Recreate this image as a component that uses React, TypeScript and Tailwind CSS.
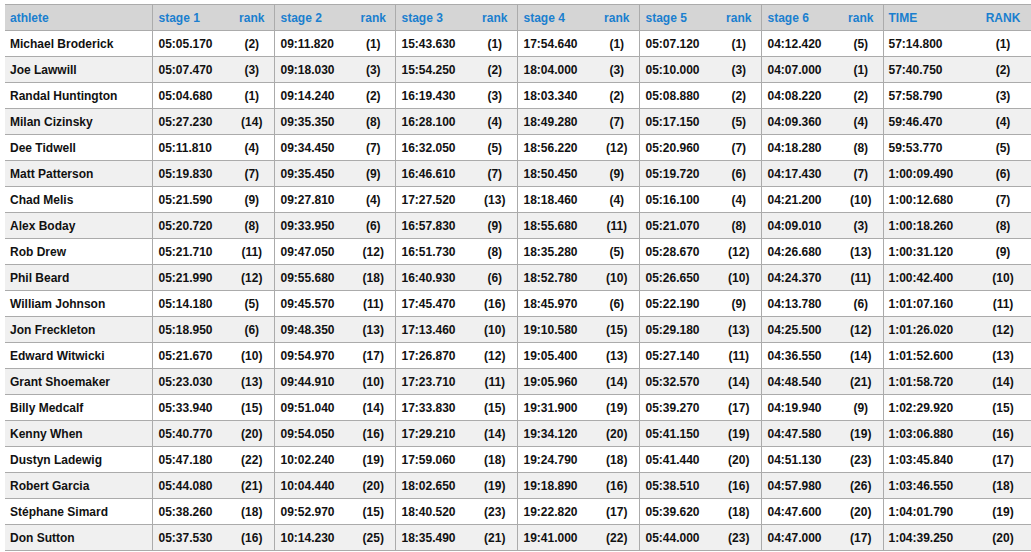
import React from 'react';

type Row = [string, ...string[]];

// name, then pairs of time/rank for 6 stages, then total time/rank
const rows: Row[] = [
  ['Michael Broderick', '05:05.170', '2', '09:11.820', '1', '15:43.630', '1', '17:54.640', '1', '05:07.120', '1', '04:12.420', '5', '57:14.800', '1'],
  ['Joe Lawwill', '05:07.470', '3', '09:18.030', '3', '15:54.250', '2', '18:04.000', '3', '05:10.000', '3', '04:07.000', '1', '57:40.750', '2'],
  ['Randal Huntington', '05:04.680', '1', '09:14.240', '2', '16:19.430', '3', '18:03.340', '2', '05:08.880', '2', '04:08.220', '2', '57:58.790', '3'],
  ['Milan Cizinsky', '05:27.230', '14', '09:35.350', '8', '16:28.100', '4', '18:49.280', '7', '05:17.150', '5', '04:09.360', '4', '59:46.470', '4'],
  ['Dee Tidwell', '05:11.810', '4', '09:34.450', '7', '16:32.050', '5', '18:56.220', '12', '05:20.960', '7', '04:18.280', '8', '59:53.770', '5'],
  ['Matt Patterson', '05:19.830', '7', '09:35.450', '9', '16:46.610', '7', '18:50.450', '9', '05:19.720', '6', '04:17.430', '7', '1:00:09.490', '6'],
  ['Chad Melis', '05:21.590', '9', '09:27.810', '4', '17:27.520', '13', '18:18.460', '4', '05:16.100', '4', '04:21.200', '10', '1:00:12.680', '7'],
  ['Alex Boday', '05:20.720', '8', '09:33.950', '6', '16:57.830', '9', '18:55.680', '11', '05:21.070', '8', '04:09.010', '3', '1:00:18.260', '8'],
  ['Rob Drew', '05:21.710', '11', '09:47.050', '12', '16:51.730', '8', '18:35.280', '5', '05:28.670', '12', '04:26.680', '13', '1:00:31.120', '9'],
  ['Phil Beard', '05:21.990', '12', '09:55.680', '18', '16:40.930', '6', '18:52.780', '10', '05:26.650', '10', '04:24.370', '11', '1:00:42.400', '10'],
  ['William Johnson', '05:14.180', '5', '09:45.570', '11', '17:45.470', '16', '18:45.970', '6', '05:22.190', '9', '04:13.780', '6', '1:01:07.160', '11'],
  ['Jon Freckleton', '05:18.950', '6', '09:48.350', '13', '17:13.460', '10', '19:10.580', '15', '05:29.180', '13', '04:25.500', '12', '1:01:26.020', '12'],
  ['Edward Witwicki', '05:21.670', '10', '09:54.970', '17', '17:26.870', '12', '19:05.400', '13', '05:27.140', '11', '04:36.550', '14', '1:01:52.600', '13'],
  ['Grant Shoemaker', '05:23.030', '13', '09:44.910', '10', '17:23.710', '11', '19:05.960', '14', '05:32.570', '14', '04:48.540', '21', '1:01:58.720', '14'],
  ['Billy Medcalf', '05:33.940', '15', '09:51.040', '14', '17:33.830', '15', '19:31.900', '19', '05:39.270', '17', '04:19.940', '9', '1:02:29.920', '15'],
  ['Kenny When', '05:40.770', '20', '09:54.050', '16', '17:29.210', '14', '19:34.120', '20', '05:41.150', '19', '04:47.580', '19', '1:03:06.880', '16'],
  ['Dustyn Ladewig', '05:47.180', '22', '10:02.240', '19', '17:59.060', '18', '19:24.790', '18', '05:41.440', '20', '04:51.130', '23', '1:03:45.840', '17'],
  ['Robert Garcia', '05:44.080', '21', '10:04.440', '20', '18:02.650', '19', '19:18.890', '16', '05:38.510', '16', '04:57.980', '26', '1:03:46.550', '18'],
  ['Stéphane Simard', '05:38.260', '18', '09:52.970', '15', '18:40.520', '23', '19:22.820', '17', '05:39.620', '18', '04:47.600', '20', '1:04:01.790', '19'],
  ['Don Sutton', '05:37.530', '16', '10:14.230', '25', '18:35.490', '21', '19:41.000', '22', '05:44.000', '23', '04:47.000', '17', '1:04:39.250', '20'],
];

const stages = ['stage 1', 'stage 2', 'stage 3', 'stage 4', 'stage 5', 'stage 6'];

const App: React.FC = () => {
  return (
    <div className="w-[1031px] h-[552px] overflow-hidden bg-white pt-[4px] pl-[5px] font-['Liberation_Sans',Arial,sans-serif] text-[12px] font-bold text-[#111]">
      <table className="table-fixed border-collapse w-[1028px]">
        <colgroup>
          <col className="w-[147px]" />
          {stages.map((s, i) => (
            <React.Fragment key={s}>
              <col className="w-[78px]" />
              <col className={i === 1 ? 'w-[43px]' : 'w-[44px]'} />
            </React.Fragment>
          ))}
          <col className="w-[90px]" />
          <col className="w-[60px]" />
        </colgroup>
        <thead>
          {/* Header row */}
          <tr className="h-[26px] bg-[#d5d5d5] text-[#1a7fcf] border-t border-b border-[#ababab]">
            <th className="text-left font-bold pl-[5px]">athlete</th>
            {stages.map((s) => (
              <React.Fragment key={s}>
                <th className="text-left font-bold pl-[6px] border-l border-[#ababab]">{s}</th>
                <th className="text-center font-bold">rank</th>
              </React.Fragment>
            ))}
            <th className="text-left font-bold pl-[5px] border-l border-[#ababab]">TIME</th>
            <th className="text-center font-bold">RANK</th>
          </tr>
        </thead>
        <tbody>
          {rows.map((r, i) => {
            const [name, ...rest] = r;
            const pairs: [string, string][] = [];
            for (let k = 0; k < rest.length; k += 2) pairs.push([rest[k], rest[k + 1]]);
            return (
              <tr
                key={name}
                className={`h-[26px] border-b border-[#ababab] ${i % 2 === 1 ? 'bg-[#f0f0f0]' : 'bg-white'}`}
              >
                <td className="pl-[5px] whitespace-nowrap">{name}</td>
                {pairs.map(([t, rk], j) => (
                  <React.Fragment key={j}>
                    <td className={`${j === 6 ? 'pl-[5px]' : 'pl-[6px]'} border-l border-[#ababab] whitespace-nowrap`}>{t}</td>
                    <td className="text-center whitespace-nowrap">({rk})</td>
                  </React.Fragment>
                ))}
              </tr>
            );
          })}
        </tbody>
      </table>
    </div>
  );
};

export default App;
